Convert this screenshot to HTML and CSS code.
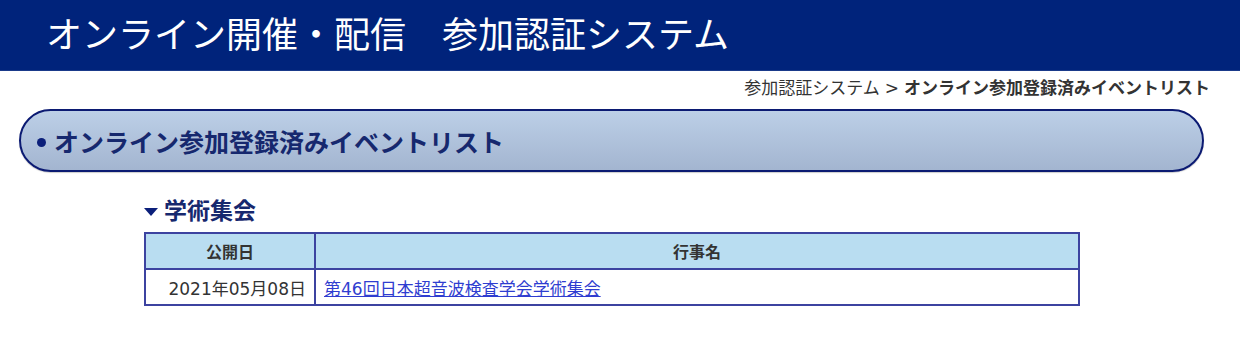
FILE: index.html
```html
<!DOCTYPE html>
<html lang="ja">
<head>
<meta charset="utf-8">
<title>参加認証システム</title>
<link rel="stylesheet" href="styles.css">
</head>
<body>
<header class="site-header">
  <h1 class="site-title">オンライン開催・配信　参加認証システム</h1>
</header>
<nav class="breadcrumb">
  <span class="crumb">参加認証システム</span>
  <span class="sep">&gt;</span>
  <span class="crumb current">オンライン参加登録済みイベントリスト</span>
</nav>
<main class="content">
  <h2 class="page-heading"><span class="dot"></span>オンライン参加登録済みイベントリスト</h2>
  <section class="section">
    <h3 class="section-title"><span class="tri"></span>学術集会</h3>
    <table class="event-table">
      <thead>
        <tr><th class="col-date">公開日</th><th>行事名</th></tr>
      </thead>
      <tbody>
        <tr><td class="col-date">2021年05月08日</td><td><a href="#">第46回日本超音波検査学会学術集会</a></td></tr>
      </tbody>
    </table>
  </section>
</main>
</body>
</html>
```
FILE: styles.css
```css
html, body {
  margin: 0;
  padding: 0;
  background: #fff;
  font-family: "DejaVu Sans", "Noto Sans CJK JP", sans-serif;
  color: #333;
}
.site-header {
  background: #00237b;
  height: 71px;
  display: flex;
  align-items: center;
  padding-left: 46px;
  border-bottom: 1px solid #1a3a8a;
  box-sizing: border-box;
}
.site-title {
  margin: 0;
  color: #fff;
  font-size: 36px;
  font-weight: 400;
  line-height: 1;
  padding-top: 2px;
}
.breadcrumb {
  display: flex;
  justify-content: flex-end;
  gap: 5px;
  padding: 5px 30px 0 0;
  font-size: 17px;
  line-height: 24px;
  color: #333;
  height: 33px;
  box-sizing: content-box;
}
.breadcrumb .current {
  font-weight: 700;
}
.content {
  padding: 0 36px 0 19px;
}
.page-heading {
  margin: 0;
  height: 63px;
  box-sizing: border-box;
  border: 2px solid #0b1a72;
  border-radius: 32px;
  background: linear-gradient(#bccfe7, #a3b5d0);
  display: flex;
  align-items: center;
  padding-left: 16px;
  font-size: 25px;
  font-weight: 700;
  color: #16286e;
  box-shadow: 0 1px 1px rgba(0,0,0,0.2);
}
.page-heading .dot {
  width: 9px;
  height: 9px;
  border-radius: 50%;
  background: #0b1f7a;
  margin-right: 8px;
  margin-top: 3px;
}
.section {
  padding: 24px 0 0 125px;
}
.section-title {
  margin: 0 0 6px;
  display: flex;
  align-items: center;
  font-size: 23px;
  font-weight: 700;
  color: #16286e;
  line-height: 30px;
}
.section-title .tri {
  width: 0;
  height: 0;
  border-left: 7px solid transparent;
  border-right: 7px solid transparent;
  border-top: 8px solid #0b1f7a;
  margin-right: 6px;
  margin-top: 2px;
}
.event-table {
  width: 936px;
  border-collapse: collapse;
  font-size: 17px;
}
.event-table th, .event-table td {
  border: 2px solid #3c43a0;
  height: 36px;
  box-sizing: border-box;
  padding: 0 8px;
}
.event-table th {
  background: #b9ddf1;
  font-size: 16px;
  font-weight: 700;
  color: #333;
  text-align: center;
}
.event-table .col-date {
  width: 170px;
}
.event-table td.col-date {
  text-align: right;
  padding-right: 8px;
}
.event-table a {
  color: #2f3dd0;
  text-decoration: underline;
}
```
